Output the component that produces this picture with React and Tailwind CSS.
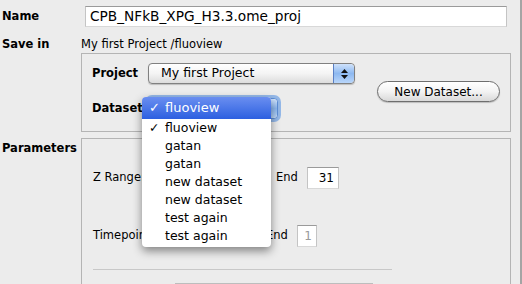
import React from 'react';

const font = { fontFamily: '"DejaVu Sans", "Liberation Sans", sans-serif' };

const items = ['fluoview', 'gatan', 'gatan', 'new dataset', 'new dataset', 'test again', 'test again'];

function Stepper() {
  return (
    <div className="flex h-full w-[21px] flex-col items-center justify-center gap-[2px] rounded-r-[4px] border-l border-[#5a7fc4] bg-gradient-to-b from-[#cfe2fb] via-[#8db8f0] to-[#b9d6fa]">
      <svg width="7" height="4" viewBox="0 0 7 4"><path d="M3.5 0L7 4H0z" fill="#111" /></svg>
      <svg width="7" height="4" viewBox="0 0 7 4"><path d="M0 0h7L3.5 4z" fill="#111" /></svg>
    </div>
  );
}

function Field({ value, dim, className }) {
  return (
    <div className={`flex h-[22px] items-center justify-end border border-t-[#9a9a9a] border-x-[#c4c4c4] border-b-[#d8d8d8] bg-white pr-[4px] text-[12px] ${dim ? 'text-[#9a9a9a]' : 'text-black'} ${className}`}>
      {value}
    </div>
  );
}

export default function App() {
  return (
    <div className="relative flex h-[284px] w-[522px] overflow-hidden bg-[#ececec] text-black" style={font}>
      <div className="flex flex-1 flex-col">
        {/* Name */}
        <div className="flex items-center pt-[6px]">
          <div className="w-[85px] pl-[2px] text-[11.5px] font-bold">Name</div>
          <div className="flex h-[21px] w-[422px] items-center border border-t-[#9a9a9a] border-x-[#c4c4c4] border-b-[#d8d8d8] bg-white pl-[4px] text-[13.7px]">
            CPB_NFkB_XPG_H3.3.ome_proj
          </div>
        </div>

        {/* Save in */}
        <div className="mt-[9px] flex items-center">
          <div className="w-[81px] pl-[2px] text-[11.5px] font-bold">Save in</div>
          <div className="text-[11.5px]">My first Project /fluoview</div>
        </div>

        {/* Project / Dataset box */}
        <div className="ml-[81px] mt-[0px] flex h-[79px] w-[430px] border border-[#b4b4b4]">
          <div className="flex flex-col pl-[10px] pt-[9px]">
            <div className="flex items-center">
              <div className="w-[56px] text-[11.5px] font-bold">Project</div>
              <div className="flex h-[21px] w-[207px] items-center overflow-hidden rounded-[4px] border border-[#808080] bg-gradient-to-b from-white via-[#f4f4f4] to-[#dcdcdc] shadow-[0_1px_1px_rgba(0,0,0,0.2)]">
                <div className="flex-1 pl-[12px] text-[12.5px]">My first Project</div>
                <Stepper />
              </div>
            </div>
            <div className="mt-[14px] flex items-center">
              <div className="w-[56px] text-[11.5px] font-bold">Dataset</div>
              <div className="flex h-[21px] w-[130px] items-center overflow-hidden rounded-[4px] border border-[#5d8fd8] bg-white shadow-[0_0_0_3px_rgba(90,150,230,0.6)]">
                <div className="flex-1 pl-[12px] text-[12.5px]">fluoview</div>
                <Stepper />
              </div>
            </div>
          </div>
          <div className="ml-auto mr-[10px] mt-[27px]">
            <div className="flex h-[21px] w-[123px] items-center justify-center rounded-full border border-[#6e6e6e] bg-gradient-to-b from-white via-[#f3f3f3] to-[#d9d9d9] text-[12px] shadow-[0_1px_1px_rgba(0,0,0,0.2)]">
              New Dataset...
            </div>
          </div>
        </div>

        {/* Parameters */}
        <div className="mt-[6px] flex flex-1">
          <div className="w-[81px] pl-[2px] pt-[2px] text-[11.5px] font-bold">Parameters</div>
          <div className="flex w-[430px] flex-col border-l border-r border-t border-[#b4b4b4] pl-[11px]">
            <div className="mt-[28px] flex items-center text-[11.5px]">
              <div className="w-[84px]">Z Range:</div>
              <div className="w-[40px] text-[#9a9a9a]">Start</div>
              <Field value="1" className="w-[32px]" />
              <div className="ml-[27px] w-[31px]">End</div>
              <Field value="31" className="w-[32px]" />
            </div>
            <div className="mt-[36px] flex items-center text-[11.5px]">
              <div className="w-[84px]">Timepoint:</div>
              <div className="w-[40px] text-[#9a9a9a]">Start</div>
              <Field value="1" dim className="w-[20px]" />
              <div className="ml-[29px] w-[31px]">End</div>
              <Field value="1" dim className="w-[20px] border-[#e4e4e4]" />
            </div>
            <div className="mt-[22px] h-px w-[299px] bg-[#c8c8c8]" />
            <div className="ml-[82px] mt-[13px] h-px w-[198px] bg-[#bdbdbd]" />
          </div>
        </div>
      </div>

      {/* right edge separator */}
      <div className="w-[2px] bg-[#a4a4a4]" />

      {/* open popup menu */}
      <div className="absolute left-[142px] top-[97px] w-[129px] rounded-[4px] bg-white pb-[2px] text-[12.5px] shadow-[0_4px_10px_rgba(0,0,0,0.45)]">
        <div className="flex h-[22px] items-center rounded-t-[4px] bg-gradient-to-b from-[#6a8ef0] to-[#2c5fe0] text-[13px] text-white">
          <span className="w-[23px] pl-[7px]">✓</span>
          <span>fluoview</span>
        </div>
        {items.map((it, i) => (
          <div key={i} className="flex h-[18px] items-center">
            <span className="w-[23px] pl-[7px]">{i === 0 ? '✓' : ''}</span>
            <span>{it}</span>
          </div>
        ))}
      </div>
    </div>
  );
}
